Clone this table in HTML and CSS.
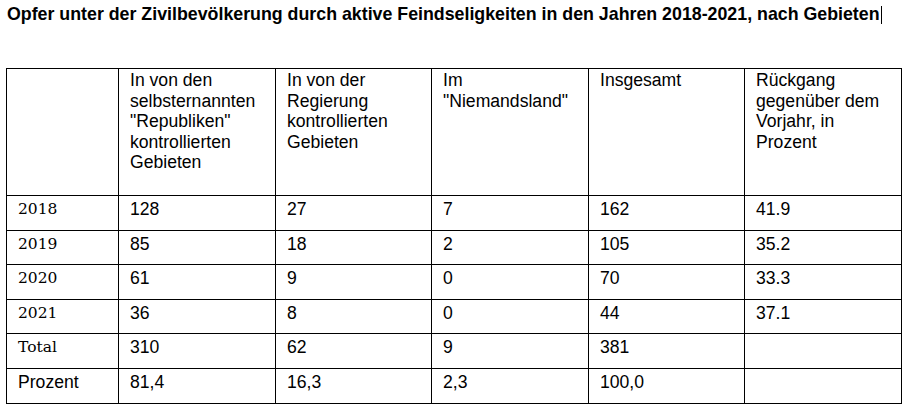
FILE: index.html
```html
<!DOCTYPE html>
<html lang="de">
<head>
<meta charset="utf-8">
<title>Opfer unter der Zivilbevölkerung</title>
<link rel="stylesheet" href="styles.css">
</head>
<body>
<h1 class="title">Opfer unter der Zivilbevölkerung durch aktive Feindseligkeiten in den Jahren 2018-2021, nach Gebieten<span class="caret"></span></h1>
<table class="data">
  <colgroup>
    <col class="c-label">
    <col class="c-num">
    <col class="c-num c-narrow">
    <col class="c-num">
    <col class="c-num c-narrow">
    <col class="c-num">
  </colgroup>
  <thead>
    <tr class="head">
      <th></th>
      <th>In von den selbsternannten "Republiken" kontrollierten Gebieten</th>
      <th>In von der Regierung kontrollierten Gebieten</th>
      <th>Im "Niemandsland"</th>
      <th>Insgesamt</th>
      <th>Rückgang gegenüber dem Vorjahr, in Prozent</th>
    </tr>
  </thead>
  <tbody>
    <tr class="r35"><td class="serif">2018</td><td>128</td><td>27</td><td>7</td><td>162</td><td>41.9</td></tr>
    <tr class="r34"><td class="serif">2019</td><td>85</td><td>18</td><td>2</td><td>105</td><td>35.2</td></tr>
    <tr class="r35"><td class="serif">2020</td><td>61</td><td>9</td><td>0</td><td>70</td><td>33.3</td></tr>
    <tr class="r34"><td class="serif">2021</td><td>36</td><td>8</td><td>0</td><td>44</td><td>37.1</td></tr>
    <tr class="r35"><td class="serif">Total</td><td>310</td><td>62</td><td>9</td><td>381</td><td></td></tr>
    <tr class="r35"><td>Prozent</td><td>81,4</td><td>16,3</td><td>2,3</td><td>100,0</td><td></td></tr>
  </tbody>
</table>
</body>
</html>
```
FILE: styles.css
```css
html, body {
  margin: 0;
  padding: 0;
  background: #ffffff;
  color: #000000;
}

body {
  padding: 4px 0 0 7px;
  font-family: "Liberation Sans", Arial, sans-serif;
}

.title {
  margin: 0;
  font-size: 17.8px;
  font-weight: bold;
  line-height: 20px;
  white-space: nowrap;
}

.caret {
  display: inline-block;
  width: 1px;
  height: 18px;
  background: #000;
  vertical-align: -4px;
  margin-left: 1px;
}

.data {
  margin: 44px 0 0 -1px;
  border-collapse: collapse;
  table-layout: fixed;
  width: 896px;
  font-size: 17.6px;
  line-height: 20.6px;
}

.c-label { width: 112px; }
.c-num { width: 157px; }
.c-narrow { width: 156px; }

.data th,
.data td {
  border: 1px solid #000;
  text-align: left;
  vertical-align: top;
  font-weight: normal;
  padding: 2px 6px 0 11px;
}

.data th {
  padding-top: 1px;
}

.head { height: 127px; }
.r35 { height: 35px; }
.r34 { height: 34px; }

.data td {
  padding-top: 3px;
}

.data td.serif {
  font-family: "DejaVu Serif", "Liberation Serif", serif;
  font-size: 15.5px;
}
```
